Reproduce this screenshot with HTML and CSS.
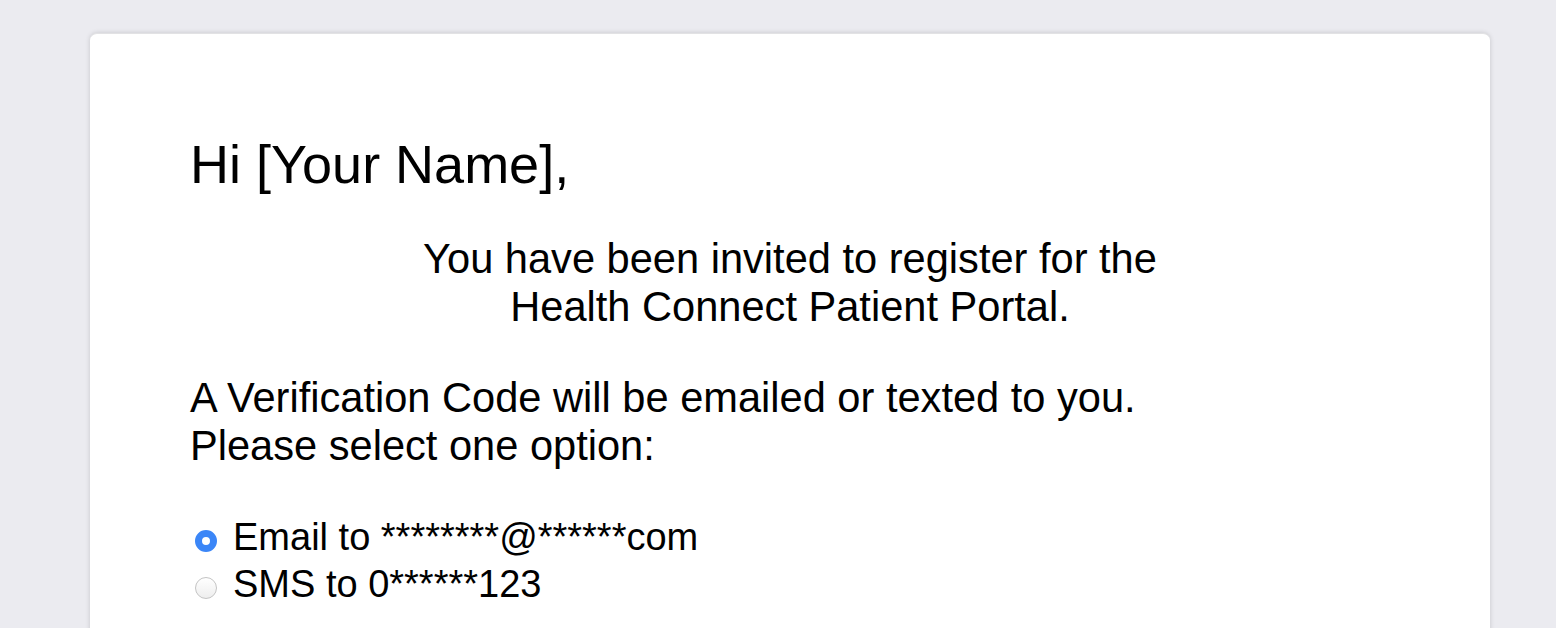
FILE: index.html
```html
<!DOCTYPE html>
<html lang="en">
<head>
<meta charset="utf-8">
<title>Health Connect Patient Portal</title>
<link rel="stylesheet" href="styles.css">
</head>
<body>
<main class="card">
  <h1 class="greeting">Hi [Your Name],</h1>
  <p class="invite">You have been invited to register for the<br>Health Connect Patient Portal.</p>
  <p class="instructions">A Verification Code will be emailed or texted to you.<br>Please select one option:</p>
  <form class="options">
    <label class="option">
      <input type="radio" name="method" value="email" checked>
      <span class="radio"></span>
      <span class="option-text">Email to ********@******com</span>
    </label>
    <label class="option">
      <input type="radio" name="method" value="sms">
      <span class="radio"></span>
      <span class="option-text">SMS to 0******123</span>
    </label>
  </form>
</main>
</body>
</html>
```

FILE: styles.css
```css
html, body {
  margin: 0;
  padding: 0;
}

body {
  background: #ebebf0;
  font-family: "Liberation Sans", Arial, Helvetica, sans-serif;
  color: #000;
  padding: 33px 66px 0 90px;
  height: 628px;
  box-sizing: border-box;
  overflow: hidden;
}

.card {
  background: #fff;
  border-radius: 7px;
  box-shadow: 0 0 5px rgba(0, 0, 0, 0.16);
  border-top: 1px solid #e2e2e4;
  padding: 99px 100px 60px 100px;
  min-height: 700px;
  box-sizing: border-box;
}

.greeting {
  font-size: 54px;
  font-weight: normal;
  margin: 0 0 40px 0;
  line-height: normal;
}

.invite {
  font-size: 41.6px;
  text-align: center;
  margin: 0 0 43px 0;
}

.instructions {
  font-size: 41.6px;
  margin: 0 0 44px 0;
}

.options {
  display: flex;
  flex-direction: column;
  font-size: 38px;
  line-height: 47px;
}

.option {
  display: flex;
  align-items: center;
}

.option input {
  position: absolute;
  opacity: 0;
  width: 0;
  height: 0;
  margin: 0;
}

.radio {
  width: 22px;
  height: 22px;
  border-radius: 50%;
  box-sizing: border-box;
  margin: 6px 16px 0 5px;
  border: 1px solid #c4c4c4;
  background: linear-gradient(#ffffff, #eeeeee);
  flex: none;
}

.option input:checked + .radio {
  border: 7px solid #3b86f7;
  background: #fff;
}
```
